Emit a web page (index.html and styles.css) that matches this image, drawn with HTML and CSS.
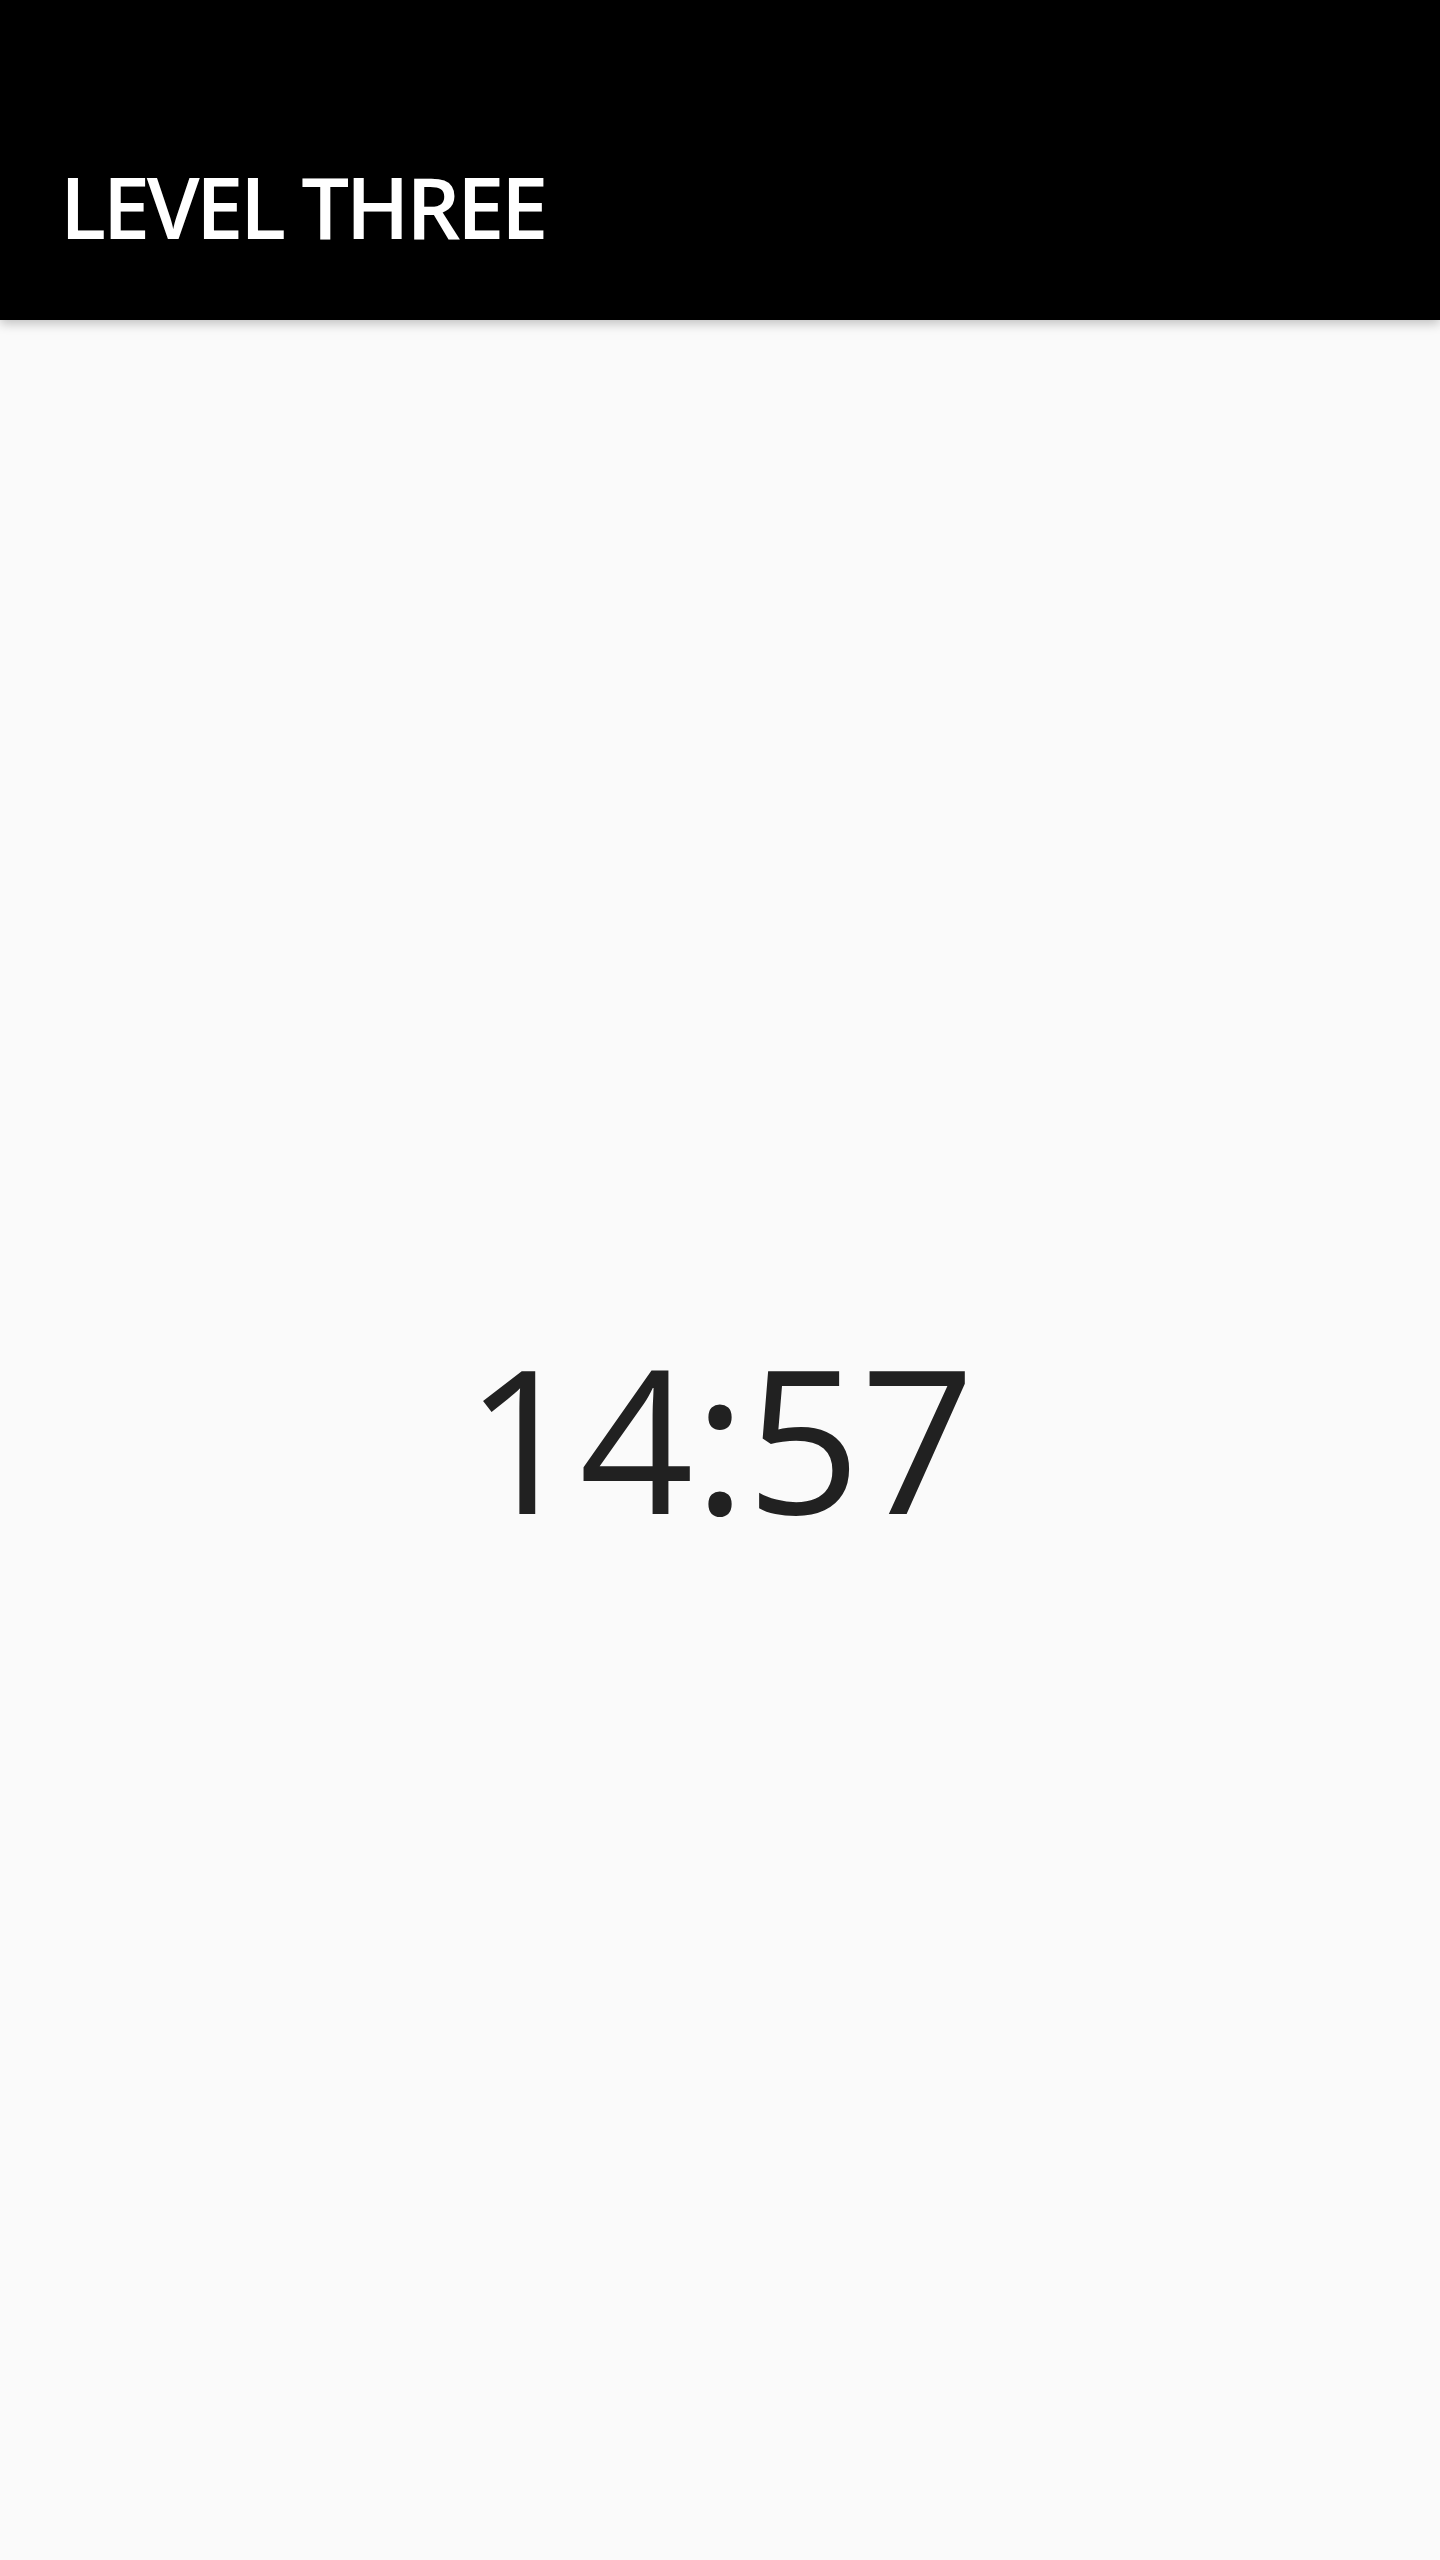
FILE: index.html
```html
<!DOCTYPE html>
<html>
<head>
<meta charset="utf-8">
<link rel="stylesheet" href="styles.css">
</head>
<body>
<div class="app">
  <header class="bar"><h1 class="title">LEVEL THREE</h1></header>
  <main class="content"><div class="timer">14:57</div></main>
</div>
</body>
</html>
```
FILE: styles.css
```css
html, body { margin: 0; padding: 0; }
body { background: #fafafa; font-family: "Open Sans", "Liberation Sans", sans-serif; }
.app { display: flex; flex-direction: column; height: 2560px; }
.bar {
  background: #000;
  height: 320px;
  flex: none;
  display: flex;
  align-items: flex-end;
  padding: 0 0 0 60px;
  box-sizing: border-box;
  box-shadow: 0 4px 10px rgba(0,0,0,0.22);
  position: relative;
  z-index: 1;
}
.title {
  margin: 0 0 71px 0;
  color: #fff;
  font-size: 85px;
  font-weight: 600;
  line-height: 1;
  letter-spacing: -3.5px;
}
.content {
  flex: 1;
  display: flex;
  align-items: center;
  justify-content: center;
  padding-bottom: 6px;
}
.timer {
  color: #212121;
  font-size: 200px;
  font-weight: 400;
  line-height: 1;
}
```
